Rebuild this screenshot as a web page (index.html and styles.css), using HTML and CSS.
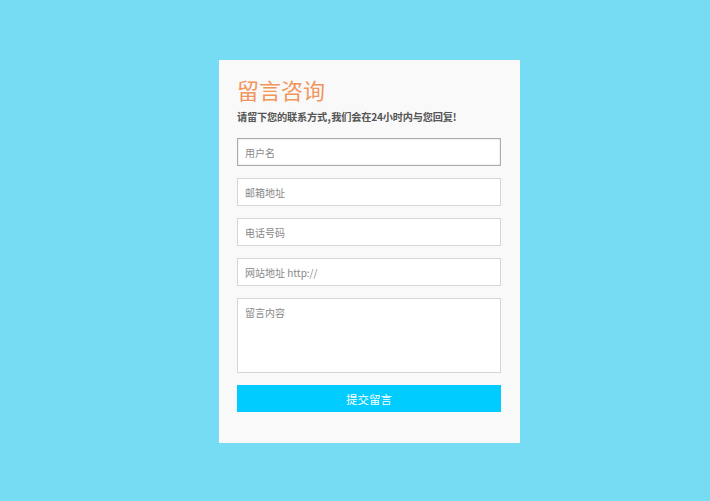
FILE: index.html
```html
<!DOCTYPE html>
<html lang="zh-CN">
<head>
<meta charset="utf-8">
<title>留言咨询</title>
<link rel="stylesheet" href="styles.css">
</head>
<body>
<div class="card">
  <h1 class="title">留言咨询</h1>
  <p class="subtitle">请留下您的联系方式 , 我们会在24小时内与您回复!</p>
  <form class="form">
    <input class="field field-focus" type="text" placeholder="用户名">
    <input class="field" type="text" placeholder="邮箱地址">
    <input class="field" type="text" placeholder="电话号码">
    <input class="field" type="text" placeholder="网站地址 http://">
    <textarea class="field area" placeholder="留言内容"></textarea>
    <button class="submit" type="button">提交留言</button>
  </form>
</div>
</body>
</html>
```

FILE: styles.css
```css
html, body {
  margin: 0;
  padding: 0;
}
body {
  background: #76dcf4;
  height: 501px;
  font-family: "Noto Sans CJK SC", "Noto Sans", sans-serif;
  overflow: hidden;
}
.card {
  box-sizing: border-box;
  width: 301px;
  margin: 60px 0 0 219px;
  padding: 16px 19px 31px 18px;
  background: #f9f9f9;
}
.title {
  margin: 0;
  font-size: 22px;
  line-height: 26px;
  font-weight: 400;
  color: #f2955c;
}
.subtitle {
  margin: 6px 0 0;
  font-size: 10.2px;
  line-height: 17px;
  font-weight: 700;
  color: #555;
  white-space: nowrap;
  letter-spacing: -0.2px;
  word-spacing: -1.5px;
}
.form {
  margin-top: 13px;
  display: flex;
  flex-direction: column;
  gap: 12px;
}
.field {
  box-sizing: border-box;
  display: block;
  width: 264px;
  height: 28px;
  margin: 0;
  padding: 0 7px;
  border: 1px solid #d6d6d6;
  background: #fff;
  font-family: "Noto Sans CJK SC", "Noto Sans", sans-serif;
  font-size: 10px;
  color: #555;
  outline: none;
  border-radius: 0;
}
.field::placeholder {
  color: #888;
}
.field-focus {
  border-color: #aaa;
  box-shadow: inset 0 0 2px rgba(0, 0, 0, 0.18);
}
.area {
  height: 75px;
  padding: 7px 7px;
  resize: none;
  line-height: 14px;
}
.submit {
  display: block;
  width: 264px;
  height: 27px;
  margin: 0;
  border: 0;
  background: #00ccff;
  color: #fff;
  font-family: "Noto Sans CJK SC", "Noto Sans", sans-serif;
  font-size: 11.5px;
  cursor: pointer;
}
```
